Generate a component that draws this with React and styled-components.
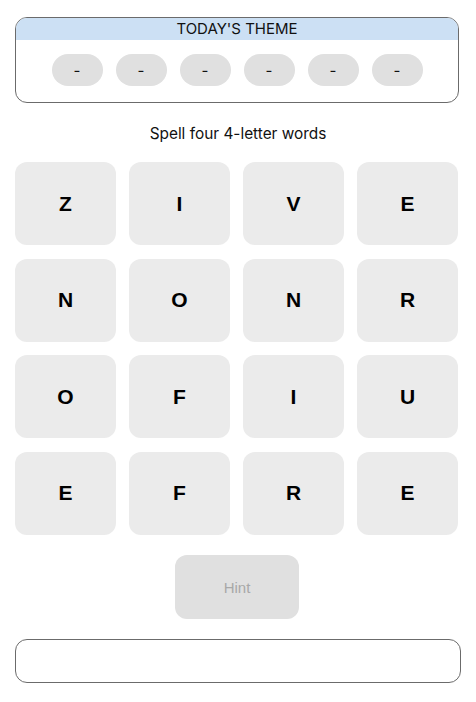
import styled, { createGlobalStyle } from 'styled-components';

const letters = ['Z', 'I', 'V', 'E', 'N', 'O', 'N', 'R', 'O', 'F', 'I', 'U', 'E', 'F', 'R', 'E'];

export default function App() {
  return (
    <>
      <GlobalStyle />
      <Page>
        <ThemeBox>
          <ThemeHeader>TODAY'S THEME</ThemeHeader>
          <PillRow>
            {Array.from({ length: 6 }).map((_, i) => (
              <Pill key={i}>-</Pill>
            ))}
          </PillRow>
        </ThemeBox>

        <Prompt>Spell four 4-letter words</Prompt>

        <Grid>
          {letters.map((letter, i) => (
            <Tile key={i}>{letter}</Tile>
          ))}
        </Grid>

        <HintButton disabled>Hint</HintButton>

        <AnswerBox />
      </Page>
    </>
  );
}

const GlobalStyle = createGlobalStyle`
  body {
    margin: 0;
    background: #fff;
    font-family: Inter, "Liberation Sans", sans-serif;
  }
`;

const Page = styled.div`
  display: flex;
  flex-direction: column;
  align-items: flex-start;
  padding: 17px 15px 0;
`;

const ThemeBox = styled.div`
  width: 444px;
  height: 86px;
  box-sizing: border-box;
  border: 1px solid #6b6b6b;
  border-radius: 12px;
  overflow: hidden;
  display: flex;
  flex-direction: column;
`;

const ThemeHeader = styled.div`
  background: #cce0f4;
  height: 22px;
  line-height: 21px;
  text-align: center;
  font-size: 15px;
  color: #111;
`;

const PillRow = styled.div`
  flex: 1;
  display: flex;
  justify-content: center;
  align-items: center;
  gap: 13px;
  padding-bottom: 2px;
`;

const Pill = styled.div`
  width: 51px;
  height: 32px;
  border-radius: 16px;
  background: #e0e0e0;
  display: flex;
  align-items: center;
  justify-content: center;
  font-size: 15px;
  color: #111;
`;

const Prompt = styled.div`
  align-self: center;
  margin-top: 22px;
  font-size: 15.4px;
  line-height: 18px;
  color: #111;
`;

const Grid = styled.div`
  margin-top: 19px;
  display: grid;
  grid-template-columns: repeat(4, 101px);
  grid-auto-rows: 83px;
  column-gap: 13px;
  row-gap: 13.5px;
`;

const Tile = styled.div`
  background: #ebebeb;
  border-radius: 12px;
  display: flex;
  align-items: center;
  justify-content: center;
  font-family: "Liberation Sans", Arial, sans-serif;
  font-weight: bold;
  font-size: 21px;
  color: #000;
`;

const HintButton = styled.button`
  align-self: center;
  margin-top: 20.5px;
  width: 124px;
  height: 64px;
  border: none;
  border-radius: 12px;
  background: #e0e0e0;
  color: #a8a8a8;
  font-family: "Liberation Sans", Arial, sans-serif;
  font-size: 15px;
  margin-right: 2px;
`;

const AnswerBox = styled.div`
  margin-top: 20px;
  width: 446px;
  height: 44px;
  box-sizing: border-box;
  border: 1px solid #6b6b6b;
  border-radius: 12px;
`;
